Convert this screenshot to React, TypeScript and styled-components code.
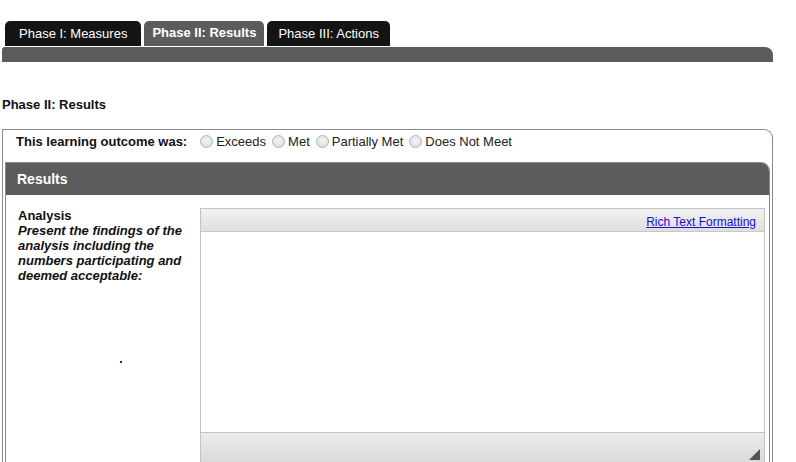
import React from "react";
import styled, { createGlobalStyle } from "styled-components";

const GlobalStyle = createGlobalStyle`
  html, body {
    margin: 0;
    padding: 0;
    background: #fff;
    overflow: hidden;
  }
  body {
    font-family: "Liberation Sans", Arial, sans-serif;
    font-size: 13px;
    color: #111;
  }
`;

const Page = styled.div`
  width: 771px;
  margin-left: 2px;
`;

const TabStrip = styled.div`
  display: flex;
  gap: 3px;
  padding-left: 3px;
  margin-top: 21px;
`;

const Tab = styled.div<{ active?: boolean; pad: number }>`
  height: 25px;
  line-height: 26px;
  padding: 0 ${({ pad }) => pad}px;
  background: ${({ active }) => (active ? "#5c5c5c" : "#141414")};
  color: #fff;
  font-size: 13px;
  font-weight: ${({ active }) => (active ? "bold" : "normal")};
  border-radius: 5px 5px 0 0;
  ${({ active }) => active && "line-height: 23px;"}
`;

const TabBar = styled.div`
  margin-top: 1px;
  height: 15px;
  background: #5c5c5c;
  border-radius: 3px 8px 0 0;
`;

const Heading = styled.h3`
  margin: 35px 0 17px;
  font-size: 13px;
  font-weight: bold;
  line-height: 15px;
`;

const OuterBox = styled.div`
  border: 1px solid #8a8a8a;
  border-bottom: none;
  border-radius: 0 9px 0 0;
  padding: 0 2px;
`;

const OutcomeRow = styled.div`
  display: flex;
  align-items: flex-start;
  height: 32px;
  box-sizing: border-box;
  padding: 4px 0 0 11px;
  font-size: 13px;
  line-height: 15px;
`;

const OutcomeLabel = styled.span`
  font-weight: bold;
  margin-right: 13px;
`;

const RadioOption = styled.label`
  display: inline-flex;
  align-items: center;
  margin-right: 6px;
  color: #222;
`;

const RadioDot = styled.span`
  width: 11px;
  height: 11px;
  border-radius: 50%;
  border: 1px solid #b4b4b4;
  background: radial-gradient(circle at 50% 40%, #f4f4f4 0%, #d8d8d8 100%);
  margin-right: 3px;
`;

const Panel = styled.div`
  border: 1px solid #8a8a8a;
  border-bottom: none;
  border-radius: 0 9px 0 0;
  overflow: hidden;
`;

const PanelHeader = styled.div`
  height: 32px;
  line-height: 32px;
  background: #5c5c5c;
  color: #fff;
  font-size: 14px;
  font-weight: bold;
  padding-left: 11px;
`;

const FieldRow = styled.div`
  display: flex;
  padding: 13px 4px 0 12px;
`;

const FieldLabel = styled.div`
  width: 182px;
  flex-shrink: 0;
  font-size: 13px;
  line-height: 15px;
`;

const FieldTitle = styled.div`
  font-weight: bold;
`;

const FieldHint = styled.div`
  font-weight: bold;
  font-style: italic;
  width: 170px;
`;

const Marker = styled.div`
  width: 2px;
  height: 2px;
  background: #22227a;
  margin: 78px 0 0 102px;
`;

const Editor = styled.div`
  flex: 1;
  border: 1px solid #c2c2c2;
  display: flex;
  flex-direction: column;
`;

const EditorToolbar = styled.div`
  height: 23px;
  box-sizing: border-box;
  display: flex;
  justify-content: flex-end;
  align-items: flex-end;
  padding: 0 8px 2px 0;
  background: linear-gradient(#f3f3f3, #dedede);
  border-bottom: 1px solid #c8c8c8;
`;

const FormatLink = styled.a`
  font-size: 12px;
  line-height: 14px;
  color: #1a0dcc;
  text-decoration: underline;
  cursor: pointer;
`;

const EditorBody = styled.div`
  height: 200px;
  background: #fff;
`;

const EditorFooter = styled.div`
  height: 27px;
  display: flex;
  justify-content: flex-end;
  align-items: flex-end;
  padding: 0 4px 4px 0;
  background: linear-gradient(#ececec, #d9d9d9);
  border-top: 1px solid #c2c2c2;
`;

const Grip = styled.svg`
  display: block;
`;

const outcomes = ["Exceeds", "Met", "Partially Met", "Does Not Meet"];

const App: React.FC = () => {
  return (
    <>
      <GlobalStyle />
      <Page>
        <TabStrip>
          <Tab pad={14}>Phase I: Measures</Tab>
          <Tab pad={8} active>
            Phase II: Results
          </Tab>
          <Tab pad={11}>Phase III: Actions</Tab>
        </TabStrip>
        <TabBar />

        <Heading>Phase II: Results</Heading>

        <OuterBox>
          <OutcomeRow>
            <OutcomeLabel>This learning outcome was:</OutcomeLabel>
            {outcomes.map((o) => (
              <RadioOption key={o}>
                <RadioDot />
                {o}
              </RadioOption>
            ))}
          </OutcomeRow>

          <Panel>
            <PanelHeader>Results</PanelHeader>
            <FieldRow>
              <FieldLabel>
                <FieldTitle>Analysis</FieldTitle>
                <FieldHint>
                  Present the findings of the analysis including the numbers
                  participating and deemed acceptable:
                </FieldHint>
                <Marker />
              </FieldLabel>
              <Editor>
                <EditorToolbar>
                  <FormatLink>Rich Text Formatting</FormatLink>
                </EditorToolbar>
                <EditorBody />
                <EditorFooter>
                  <Grip width="11" height="11" viewBox="0 0 11 11">
                    <polygon points="11,0 11,11 0,11" fill="#555" />
                  </Grip>
                </EditorFooter>
              </Editor>
            </FieldRow>
          </Panel>
        </OuterBox>
      </Page>
    </>
  );
};

export default App;
